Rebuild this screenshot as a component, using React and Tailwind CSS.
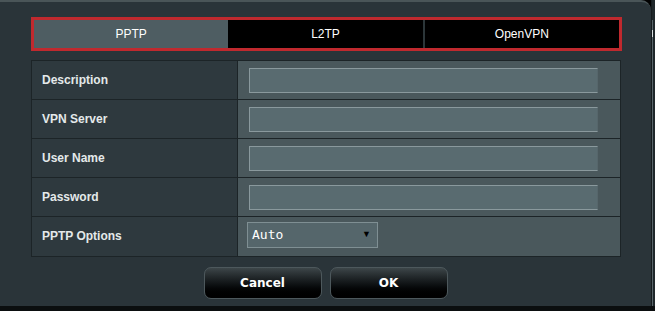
import { useState } from "react";

const TABS = ["PPTP", "L2TP", "OpenVPN"];
const FIELDS = ["Description", "VPN Server", "User Name", "Password"];

function Row({ label, children, last }) {
  return (
    <div className={`flex h-[39px] ${last ? "" : "border-b border-[#1c2427]"}`}>
      <div className="w-[206px] flex-shrink-0 flex items-center pl-[10px] pb-px bg-[#2e393e] border-r border-[#1c2427] text-[12px] font-bold text-[#e4e9ea]">
        {label}
      </div>
      <div className="flex-1 flex items-center pl-[11px] bg-[#4a585c]">{children}</div>
    </div>
  );
}

function Button({ children }) {
  return (
    <button
      type="button"
      className="w-[118px] h-[32px] rounded-[7px] border border-[#4d585c] bg-gradient-to-b from-[#3d4649] via-[#121618] to-black text-white text-[12px] font-bold"
      style={{ fontFamily: '"DejaVu Sans", Verdana, sans-serif' }}
    >
      {children}
    </button>
  );
}

export default function App() {
  const [active, setActive] = useState("PPTP");

  return (
    <div
      className="w-[655px] h-[311px] bg-black flex flex-col overflow-hidden"
      style={{ fontFamily: '"Liberation Sans", Arial, sans-serif' }}
    >
      <div className="flex h-[306px]">
        {/* Dialog */}
        <div className="w-[651px] h-full bg-[#2a3439] border-t-2 border-[#4a5558] rounded-tr-[10px] pt-[15px] pl-[31px] flex flex-col">
          {/* Tabs */}
          <div className="w-[591px] h-[34px] border-[3px] border-[#c0292e] flex">
            {TABS.map((t, i) => (
              <button
                key={t}
                type="button"
                onClick={() => setActive(t)}
                className={`flex-1 flex items-center justify-center text-[12px] text-white
                            ${active === t ? "bg-[#4e5d62]" : "bg-black"}
                            ${i === 2 ? "border-l-2 border-[#2c3639]" : ""}`}
              >
                {t}
              </button>
            ))}
          </div>

          {/* Form table */}
          <div className="w-[590px] mt-[9px] border border-[#1c2427]">
            {FIELDS.map((f) => (
              <Row key={f} label={f}>
                <input
                  type="text"
                  className="w-[349px] h-[25px] bg-[#596b70] border border-[#8a999d] border-r-[#56666b] outline-none"
                />
              </Row>
            ))}
            <Row label="PPTP Options" last>
              <div className="-ml-[2px] mb-[3px] w-[131px] h-[26px] bg-[#55666b] border border-[#7f8f93] flex items-center justify-between pl-[4px] pr-[6px]">
                <span
                  className="text-[13px] text-white"
                  style={{ fontFamily: '"DejaVu Sans Mono", monospace' }}
                >
                  Auto
                </span>
                <span className="text-[9px] text-black">▼</span>
              </div>
            </Row>
          </div>

          {/* Buttons */}
          <div className="mt-[10px] flex justify-center gap-[8px] pr-[31px]">
            <Button>Cancel</Button>
            <Button>OK</Button>
          </div>
        </div>

        {/* Right edge strip */}
        <div className="flex-1 bg-[#1f272a] flex">
          <div className="w-px bg-[#161c1e]" />
          <div className="w-px mt-[20px] bg-[#59656a] flex flex-col">
            <div className="mt-[10px] h-[7px] bg-[#d8dee0]" />
          </div>
        </div>
      </div>
      <div className="flex-1 bg-[#0b0e0f]" />
    </div>
  );
}
